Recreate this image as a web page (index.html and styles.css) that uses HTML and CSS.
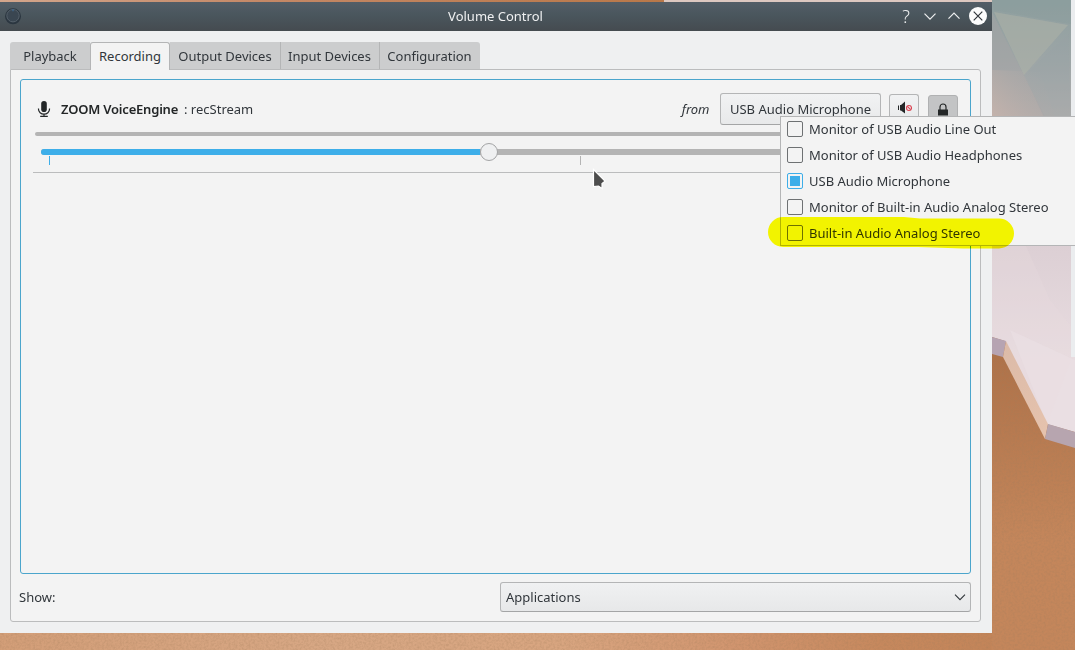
FILE: index.html
```html
<!DOCTYPE html>
<html lang="en">
<head>
    <meta charset="UTF-8">
    <meta name="viewport" content="width=device-width, initial-scale=1.0">
    <title>Volume Control</title>
    <link rel="stylesheet" href="styles.css">
</head>
<body>
    <!-- Desktop wallpaper -->
    <svg class="wallpaper" viewBox="0 0 1075 650" width="1075" height="650">
        <defs>
            <linearGradient id="sand" x1="0" x2="1" y1="0" y2="0">
                <stop offset="0" stop-color="#d39e78"/>
                <stop offset=".3" stop-color="#d7a784"/>
                <stop offset=".52" stop-color="#d8a580"/>
                <stop offset=".68" stop-color="#d1956f"/>
                <stop offset=".82" stop-color="#c6885d"/>
                <stop offset="1" stop-color="#c18256"/>
            </linearGradient>
            <linearGradient id="shade" x1="0" x2="0" y1="340" y2="540" gradientUnits="userSpaceOnUse">
                <stop offset="0" stop-color="#ad7047"/>
                <stop offset="1" stop-color="#c4865b"/>
            </linearGradient>
            <linearGradient id="sky" x1="0" x2="0" y1="0" y2="360" gradientUnits="userSpaceOnUse">
                <stop offset="0" stop-color="#8e9f9f"/>
                <stop offset=".18" stop-color="#9ea6a7"/>
                <stop offset=".32" stop-color="#b1afae"/>
                <stop offset=".68" stop-color="#dccfd4"/>
                <stop offset="1" stop-color="#e8dce0"/>
            </linearGradient>
            <linearGradient id="topStrip" x1="0" x2="1" y1="0" y2="0">
                <stop offset="0" stop-color="#d3a68c"/>
                <stop offset=".4" stop-color="#c48866"/>
                <stop offset="1" stop-color="#b97849"/>
            </linearGradient>
            <linearGradient id="glow" x1="992" y1="120" x2="1045" y2="75" gradientUnits="userSpaceOnUse">
                <stop offset="0" stop-color="#cbb5ac" stop-opacity=".8"/>
                <stop offset="1" stop-color="#b0aaa8" stop-opacity="0"/>
            </linearGradient>
            <linearGradient id="edge" x1="1003" y1="350" x2="1045" y2="430" gradientUnits="userSpaceOnUse">
                <stop offset="0" stop-color="#dcbba8"/>
                <stop offset="1" stop-color="#e5c2ad"/>
            </linearGradient>
            <filter id="grain" x="0" y="0" width="100%" height="100%">
                <feTurbulence type="fractalNoise" baseFrequency=".45" numOctaves="2" seed="4"/>
                <feColorMatrix values="0 0 0 0 .35  0 0 0 0 .2  0 0 0 0 .1  .6 0 0 0 -.22"/>
            </filter>
        </defs>
        <rect width="1075" height="650" fill="url(#sand)"/>
        <rect x="992" y="330" width="83" height="320" fill="url(#shade)"/>
        <rect y="340" width="1075" height="310" filter="url(#grain)"/>
        <rect width="664" height="3" fill="url(#topStrip)"/>
        <rect x="664" width="328" height="3" fill="#ddc8c0"/>
        <path d="M992 0H1075V432L1047 424L1005 341L992 337Z" fill="url(#sky)"/>
        <path d="M992 12L1045 117H992Z" fill="#a9a5a6" opacity=".4"/>
        <path d="M992 70V117H1055L1040 72Z" fill="url(#glow)"/>
        <path d="M994 12L1068 25L1024 75Z" fill="#abb0a7" opacity=".6"/>
        <path d="M1068 34L1024 75L1044 117H1071Z" fill="#98a2a5" opacity=".3"/>
        <path d="M992 0H1071V24L994 10Z" fill="#879d9c" opacity=".3"/>
        <path d="M992 246H1026L1050 300L1071 326V360L1047 424L1005 341L992 337Z" fill="#e8d9dd" opacity=".3"/>
        <path d="M1010 330L1047 424L1075 432V360Z" fill="#ebe2e5" opacity=".5"/>
        <path d="M992 337L1006 341L1003 357L992 354Z" fill="#b6a4b2"/>
        <path d="M1006 341L1048 424L1045 439L1003 357Z" fill="url(#edge)"/>
        <path d="M1048 424L1075 432V448L1045 439Z" fill="#b7a5af"/>
        <rect x="1071" width="4" height="357" fill="#ebedef"/>
    </svg>

    <div class="window">
        <div class="titlebar">
            <svg class="app-icon" viewBox="0 0 18 18" width="18" height="18">
                <circle cx="9" cy="9.3" r="8" fill="#2b3640"/>
                <circle cx="9" cy="8.7" r="6.2" fill="#3a4651" stroke="#56616b"/>
                <path d="M9 2V4.2" stroke="#41678c" stroke-width="1.4"/>
            </svg>
            <span class="title">Volume Control</span>
            <div class="window-buttons">
                <span class="help">?</span>
                <svg viewBox="0 0 18 18" width="18" height="18"><path d="M3.5 6.7L9 12.2L14.5 6.7"/></svg>
                <svg viewBox="0 0 18 18" width="18" height="18"><path d="M3.5 11.7L9 6.2L14.5 11.7"/></svg>
                <svg class="close" viewBox="0 0 18 18" width="18" height="18"><circle cx="9" cy="9" r="9"/><path d="M4.7 4.7L13.3 13.3M13.3 4.7L4.7 13.3"/></svg>
            </div>
        </div>

        <div class="content">
            <div class="tabs">
                <div class="tab tab-playback">Playback</div>
                <div class="tab tab-recording active">Recording</div>
                <div class="tab tab-output">Output Devices</div>
                <div class="tab tab-input">Input Devices</div>
                <div class="tab tab-config">Configuration</div>
            </div>

            <div class="panel">
                <div class="streams">
                    <div class="stream-header">
                        <svg class="mic" viewBox="0 0 14 18" width="14" height="18">
                            <rect x="4.2" y="1" width="5.6" height="11" rx="2.8" fill="#232627"/>
                            <path d="M1.5 8.5V9.3A5.5 4.8 0 0 0 12.5 9.3V8.5M7 14V16M3.2 16.4H10.8" fill="none" stroke="#232627" stroke-width="1.2"/>
                        </svg>
                        <span class="app-name">ZOOM VoiceEngine</span>
                        <span class="stream-name">: recStream</span>
                        <span class="from">from</span>
                        <button class="button source">USB Audio Microphone</button>
                        <button class="button mute">
                            <svg viewBox="0 0 16 16" width="16" height="16">
                                <path d="M2.5 4.5V9" stroke="#232627" fill="none"/>
                                <path d="M4 4H5L9 .5V12.5L5 9.5H4Z" fill="#232627"/>
                                <circle cx="13" cy="7" r="2.5" fill="none" stroke="#da4453" stroke-width="1.1"/>
                                <path d="M11.3 5.3L14.7 8.7" stroke="#da4453" stroke-width="1.1"/>
                            </svg>
                        </button>
                        <button class="button lock">
                            <svg viewBox="0 0 16 16" width="16" height="16">
                                <path d="M5 8V5A3 3 0 0 1 11 5V8" fill="none" stroke="#232627" stroke-width="1.2"/>
                                <rect x="3" y="7.5" width="10" height="6" fill="#232627"/>
                            </svg>
                        </button>
                    </div>
                    <div class="level"></div>
                    <div class="slider">
                        <div class="track"><div class="fill"></div><div class="handle"></div></div>
                        <div class="ticks"><span class="tick low"></span><span class="tick"></span></div>
                    </div>
                    <div class="separator"></div>
                </div>

                <div class="footer">
                    <span>Show:</span>
                    <div class="select">
                        <span>Applications</span>
                        <svg viewBox="0 0 12 8" width="12" height="8"><path d="M1 1.7L6 6.7L11 1.7" fill="none" stroke="#31363b" stroke-width="1.1"/></svg>
                    </div>
                </div>
            </div>
        </div>
    </div>

    <!-- Source menu -->
    <div class="menu">
        <div class="menu-item"><span class="check"></span>Monitor of USB Audio Line Out</div>
        <div class="menu-item"><span class="check"></span>Monitor of USB Audio Headphones</div>
        <div class="menu-item"><span class="check checked"></span>USB Audio Microphone</div>
        <div class="menu-item"><span class="check"></span>Monitor of Built-in Audio Analog Stereo</div>
        <div class="menu-item"><span class="check"></span>Built-in Audio Analog Stereo</div>
    </div>

    <svg class="marker" viewBox="0 0 246 32" width="246" height="32">
        <path d="M15 0H136L152 1.5H231A15 15 0 0 1 231 31.5H195L150 30H15A15 15 0 0 1 15 0Z" fill="#feff00"/>
    </svg>

    <svg class="cursor" viewBox="0 0 16 23" width="16" height="23">
        <path d="M1.5 1.5L13 13.2L10 15.5V20.5L6.5 18L1.5 18.5Z" fill="#4d4d4d" stroke="#fff" stroke-width="1.2"/>
    </svg>
</body>
</html>
```
FILE: styles.css
```css
* {
    box-sizing: border-box;
}

body {
    margin: 0;
    width: 1075px;
    height: 650px;
    padding-top: 2px;
    overflow: hidden;
    position: relative;
    font-family: "Noto Sans", sans-serif;
    font-size: 13px;
    line-height: 18px;
    color: #31363b;
    white-space: nowrap;
}

.wallpaper {
    position: absolute;
    left: 0;
    top: 0;
    z-index: -1;
}

/* Window */
.window {
    width: 992px;
    height: 631px;
    display: flex;
    flex-direction: column;
    background-color: #eff0f1;
}

.titlebar {
    height: 29px;
    display: grid;
    grid-template-columns: 96px 1fr 96px;
    align-items: center;
    padding: 0 5px 1px 4px;
    background: linear-gradient(#535e67, #4a565d 45%, #454b50);
    color: #eff0f1;
}

.title {
    text-align: center;
}

.window-buttons {
    display: flex;
    justify-content: flex-end;
    align-items: center;
    gap: 6px;
}

.window-buttons svg {
    fill: none;
    stroke: #eff0f1;
    stroke-width: 1.2;
}

.window-buttons .close circle {
    fill: #fcfcfc;
    stroke: none;
}

.window-buttons .close path {
    stroke: #31363b;
}

.help {
    width: 18px;
    text-align: center;
    font-size: 18px;
    font-weight: 300;
}

.content {
    flex: 1;
    display: flex;
    flex-direction: column;
    padding: 11px 11px 11px 10px;
}

/* Tabs */
.tabs {
    display: flex;
    height: 28px;
    margin-bottom: -1px;
}

.tab {
    height: 27px;
    line-height: 28px;
    text-align: center;
    background-color: #cccdce;
    border-right: 1px solid #b4b5b6;
}

.tab-playback {
    width: 80px;
    border-radius: 3px 0 0 0;
    border-right: 0;
}

.tab-recording {
    width: 80px;
}

.tab-output {
    width: 111px;
}

.tab-input {
    width: 99px;
    padding-right: 1px;
}

.tab-config {
    width: 100px;
    padding-right: 1px;
    border-right: 0;
    border-radius: 0 3px 0 0;
}

.tab.active {
    height: 28px;
    line-height: 27px;
    background-color: #f3f3f3;
    border: 1px solid #b4b5b6;
    border-bottom: 0;
    border-radius: 3px 3px 0 0;
    z-index: 1;
}

.panel {
    flex: 1;
    display: flex;
    flex-direction: column;
    border: 1px solid #bbbcbd;
    border-radius: 0 3px 3px 3px;
    background-color: #f3f3f3;
    padding: 9px 9px 9px;
}

.streams {
    flex: 1;
    border: 1px solid #4ba5cc;
    border-radius: 3px;
    padding: 12px;
}

.stream-header {
    display: flex;
    align-items: center;
    height: 34px;
    margin-bottom: 6px;
}

.mic {
    margin: 0 10px 0 4px;
}

.app-name {
    font-weight: 600;
    letter-spacing: -0.2px;
    color: #232627;
    width: 123px;
}

.stream-name {
    flex: 1;
}

.from {
    font-style: italic;
    margin-right: 10.5px;
}

/* Buttons */
.button {
    font: inherit;
    color: inherit;
    padding: 0;
    height: 32px;
    border: 1px solid #b4b5b6;
    border-bottom-color: #a4a5a6;
    border-radius: 3px;
    background: linear-gradient(#f1f2f3, #e8e9ea);
    display: flex;
    align-items: center;
    justify-content: center;
}

.source {
    width: 161px;
    margin-right: 8px;
}

.mute {
    width: 30px;
    height: 30px;
    margin-right: 9px;
}

.lock {
    width: 30px;
    height: 30px;
    margin-top: 2px;
    border-color: #b0b1b2;
    background: #c3c4c5;
}

.level {
    height: 4px;
    margin-left: 2px;
    border-radius: 2px;
    background-color: #b4b4b4;
}

.slider {
    padding: 13px 8px 0;
}

.track {
    height: 6px;
    border-radius: 3px;
    background-color: #b4b4b4;
    display: flex;
    align-items: center;
}

.fill {
    width: 439px;
    height: 6px;
    border-radius: 3px 0 0 3px;
    background-color: #3daee9;
}

.handle {
    width: 18px;
    height: 18px;
    border: 1px solid #a3a4a5;
    border-radius: 50%;
    background-color: #eff0f1;
}

.ticks {
    display: flex;
    gap: 530px;
    padding: 1px 0 0 8px;
}

.tick {
    width: 1px;
    height: 9px;
    background-color: #b4b4b4;
}

.tick.low {
    background-color: #3daee9;
}

.separator {
    height: 1px;
    margin-top: 7px;
    background-color: #bbbcbd;
}

/* Footer */
.footer {
    display: flex;
    justify-content: space-between;
    align-items: center;
    margin-top: 8px;
    margin-left: -1px;
}

.select {
    width: 471px;
    height: 30px;
    display: flex;
    justify-content: space-between;
    align-items: center;
    padding: 0 4px 0 5px;
    border: 1px solid #b4b5b6;
    border-bottom-color: #a4a5a6;
    border-radius: 3px;
    background: linear-gradient(#f0f1f2, #e7e8e9);
}

/* Menu */
.menu {
    position: absolute;
    left: 780px;
    top: 116px;
    width: 310px;
    height: 130px;
    border: 1px solid #b4b5b6;
    background-color: #f3f3f3;
}

.menu-item {
    display: flex;
    align-items: center;
    gap: 6px;
    height: 26px;
    padding-left: 6px;
    position: relative;
    top: -1px;
}

.check {
    width: 16px;
    height: 16px;
    border: 1px solid #6e7173;
    border-radius: 2px;
    padding: 2px;
}

.check.checked {
    border-color: #3daee9;
    background-color: #3daee9;
    background-clip: content-box;
}

/* Yellow highlighter stroke */
.marker {
    position: absolute;
    left: 768px;
    top: 217px;
    mix-blend-mode: multiply;
}

.cursor {
    position: absolute;
    left: 592px;
    top: 168px;
}
```
